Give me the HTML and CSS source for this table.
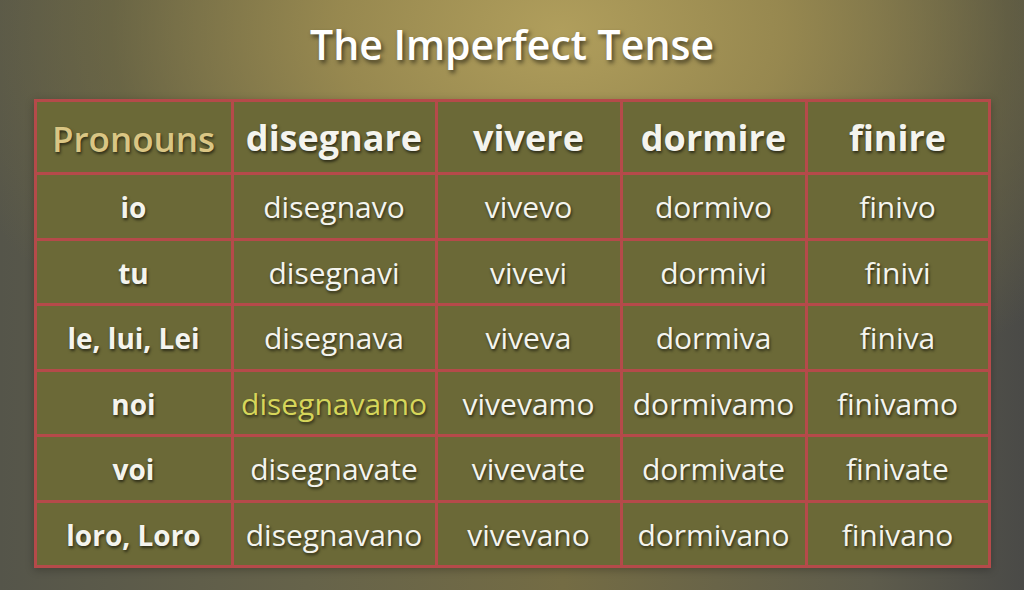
FILE: index.html
```html
<!DOCTYPE html>
<html>
<head>
<meta charset="utf-8">
<link rel="stylesheet" href="styles.css">
</head>
<body>
<div class="stage">
  <h1 class="title">The Imperfect Tense</h1>
  <table class="conj">
    <colgroup>
      <col class="c1"><col class="c2"><col class="c3"><col class="c4"><col class="c5">
    </colgroup>
    <thead>
      <tr class="head">
        <th class="pron-h">Pronouns</th>
        <th>disegnare</th>
        <th>vivere</th>
        <th>dormire</th>
        <th>finire</th>
      </tr>
    </thead>
    <tbody>
      <tr><th>io</th><td>disegnavo</td><td>vivevo</td><td>dormivo</td><td>finivo</td></tr>
      <tr><th>tu</th><td>disegnavi</td><td>vivevi</td><td>dormivi</td><td>finivi</td></tr>
      <tr><th>le, lui, Lei</th><td>disegnava</td><td>viveva</td><td>dormiva</td><td>finiva</td></tr>
      <tr><th>noi</th><td class="hl">disegnavamo</td><td>vivevamo</td><td>dormivamo</td><td>finivamo</td></tr>
      <tr><th>voi</th><td>disegnavate</td><td>vivevate</td><td>dormivate</td><td>finivate</td></tr>
      <tr><th>loro, Loro</th><td>disegnavano</td><td>vivevano</td><td>dormivano</td><td>finivano</td></tr>
    </tbody>
  </table>
</div>
</body>
</html>
```
FILE: styles.css
```css
html, body {
  margin: 0;
  padding: 0;
  width: 1024px;
  height: 590px;
  overflow: hidden;
}
body {
  font-family: "Open Sans", "DejaVu Sans", sans-serif;
  background:
    radial-gradient(ellipse 640px 420px at 560px 30px, rgba(176,158,92,1) 0%, rgba(156,140,80,0.9) 35%, rgba(120,112,64,0.5) 70%, rgba(90,88,70,0) 100%),
    linear-gradient(90deg, #55554a 0%, #66634a 30%, #746c44 55%, #5e5c4c 85%, #4a4a47 100%);
}
.stage {
  display: flex;
  flex-direction: column;
  align-items: center;
  padding-top: 20px;
}
.title {
  margin: 0;
  font-size: 41px;
  font-weight: 600;
  color: #ffffff;
  line-height: 48px;
  text-shadow: 2px 3px 4px rgba(0,0,0,0.55);
}
.conj {
  margin-top: 31px;
  border-collapse: collapse;
  width: 954px;
  table-layout: fixed;
  border: 3px solid #b54a4a;
  box-shadow: 0 2px 8px rgba(0,0,0,0.25);
}
.c1 { width: 197px; }
.c2 { width: 204px; }
.c3 { width: 185px; }
.c4 { width: 185px; }
.c5 { width: 183px; }
.conj th, .conj td {
  border: 3px solid #b54a4a;
  background: #6b6937;
  text-align: center;
  color: #f4f4ee;
  text-shadow: 1px 2px 3px rgba(0,0,0,0.6);
  padding: 2px 0 0;
  height: 60.5px;
  line-height: 1;
  white-space: nowrap;
}
.conj td {
  font-size: 30px;
  font-weight: 400;
}
.conj tbody th {
  font-size: 28px;
  font-weight: 700;
}
.conj .head th {
  font-size: 36px;
  font-weight: 700;
  height: 68px;
}
.conj .head .pron-h {
  color: #dac684;
  font-size: 35px;
  font-weight: 600;
}
.conj td.hl {
  color: #d6d65a;
}
```
